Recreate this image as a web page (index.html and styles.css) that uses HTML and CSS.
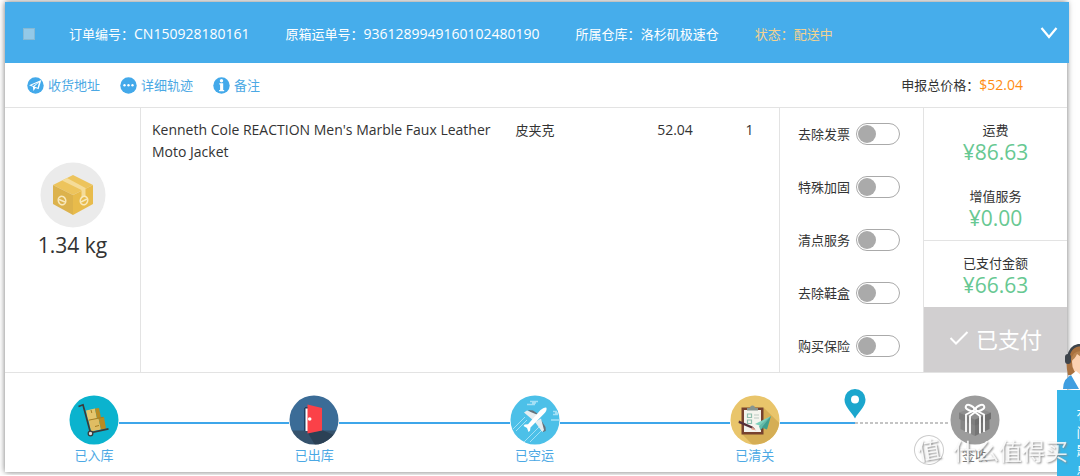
FILE: index.html
```html
<!DOCTYPE html>
<html lang="zh-CN">
<head>
<meta charset="utf-8">
<meta name="viewport" content="width=device-width, initial-scale=1">
<title>订单详情</title>
<link rel="stylesheet" href="styles.css">
</head>
<body>
<main class="order">
  <header class="order-head">
    <input class="pick" type="checkbox" aria-label="选择订单">
    <span class="field">订单编号<span class="colon">：</span><span class="num">CN150928180161</span></span>
    <span class="field">原箱运单号<span class="colon">：</span><span class="num">9361289949160102480190</span></span>
    <span class="field">所属仓库<span class="colon">：</span>洛杉矶极速仓</span>
    <span class="field state">状态<span class="colon">：</span>配送中</span>
    <button class="fold" type="button" aria-label="收起">
      <svg width="18" height="14" viewBox="0 0 18 14"><path d="M1.500 1 9 10 16.500 1" fill="none" stroke="#fff" stroke-width="2.200"/></svg>
    </button>
  </header>

  <nav class="tools">
    <a href="#address"><svg width="17" height="17" viewBox="0 0 17 17"><circle cx="8.500" cy="8.500" r="8.200" fill="#43a9ea"/><path d="M14.300 3 2 8.300l3.900 1.500.5 4.200 2.200-3 3 1.200z" fill="#fff"/><path d="M12 5.300 7.400 9.500l3.200 1.200zM11 5.400 4.500 8.300l1.800.7z" fill="#43a9ea"/></svg>收货地址</a>
    <a href="#trace"><svg width="17" height="17" viewBox="0 0 17 17"><circle cx="8.500" cy="8.500" r="8.200" fill="#43a9ea"/><g fill="#fff"><circle cx="4.500" cy="8.200" r="1.200"/><circle cx="8.500" cy="8.200" r="1.200"/><circle cx="12.500" cy="8.200" r="1.200"/></g></svg>详细轨迹</a>
    <a href="#note"><svg width="17" height="17" viewBox="0 0 17 17"><circle cx="8.500" cy="8.500" r="8.200" fill="#43a9ea"/><circle cx="8.500" cy="3.700" r="1.700" fill="#fff"/><path d="M6.300 6.200h3.900v6.800h1V14.300H6.100V13h1V7.400h-.8z" fill="#fff"/></svg>备注</a>
    <span class="total">申报总价格<span class="colon">：</span><span class="num amount">$52.04</span></span>
  </nav>

  <section class="detail">
    <div class="weight">
      <svg width="66" height="66" viewBox="0 0 66 66"><circle cx="33" cy="33" r="32.500" fill="#ebebeb"/><path d="M33 13 53 23 33 33 13 23z" fill="#edc45c"/><path d="M13 23 33 33v20L13 42z" fill="#dcb24c"/><path d="M53 23 33 33v20l20-11z" fill="#e8bb4b"/><path d="m22 18.500 5-2.500 18.500 10v8l-4 2v-8z" fill="#f5dc98"/><g fill="none" stroke="#f8e9bd" stroke-width="1.500"><ellipse cx="22" cy="38.500" rx="3.700" ry="4.300" transform="rotate(-20 22 38.500)"/><path d="m19 37.500 6 2.500"/><ellipse cx="44" cy="38.500" rx="3.700" ry="4.300" transform="rotate(20 44 38.500)"/><path d="m41 40 6-3"/></g></svg>
      <strong>1.34 kg</strong>
    </div>
    <div class="goods">
      <table>
        <tbody><tr>
          <td class="c-name num">Kenneth Cole REACTION Men's Marble Faux Leather Moto Jacket</td>
          <td class="c-type">皮夹克</td>
          <td class="c-price num">52.04</td>
          <td class="c-qty num">1</td>
        </tr></tbody>
      </table>
    </div>
    <div class="options">
      <label>去除发票<input type="checkbox" class="switch"></label>
      <label>特殊加固<input type="checkbox" class="switch"></label>
      <label>清点服务<input type="checkbox" class="switch"></label>
      <label>去除鞋盒<input type="checkbox" class="switch"></label>
      <label>购买保险<input type="checkbox" class="switch"></label>
    </div>
    <div class="bill">
      <dl class="fees">
        <div><dt>运费</dt><dd>¥86.63</dd></div>
        <div><dt>增值服务</dt><dd>¥0.00</dd></div>
      </dl>
      <dl class="paid">
        <div><dt>已支付金额</dt><dd>¥66.63</dd></div>
      </dl>
      <button class="pay" type="button"><svg width="20" height="16" viewBox="0 0 20 16"><path d="m1.500 8 5.500 5.500L18.500 2" fill="none" stroke="#fff" stroke-width="2"/></svg>已支付</button>
    </div>
  </section>

  <ol class="steps">
    <li class="step">
      <svg width="50" height="50" viewBox="0 0 50 50"><circle cx="25" cy="25" r="24.500" fill="#0bb3ce"/><path d="m17 15.500 9-2 2 10-9 2z" fill="#e5c66d"/><path d="m26 13.500 4-.5 2 9.500-4 1z" fill="#b88b22"/><path d="m19.500 25 10-2 2.500 11.500-10 2z" fill="#dfbd63"/><path d="m29.500 23 5.500-1 2 11.500-5 1z" fill="#b88b22"/><path d="m19.500 25.200 15-3M26 31.500l4-1M22 15l.8 3" stroke="#a57d20" stroke-width="1"/><path d="M9.500 11.500 14 9.800l7.500 28 18-4" fill="none" stroke="#3b3b3b" stroke-width="1.700"/><circle cx="21.500" cy="38.500" r="2.300" fill="#ddd" stroke="#3b3b3b" stroke-width="1.300"/></svg>
      <span>已入库</span>
    </li>
    <li class="line"></li>
    <li class="step">
      <svg width="50" height="50" viewBox="0 0 50 50"><clipPath id="disc"><circle cx="25" cy="25" r="24.500"/></clipPath><g clip-path="url(#disc)"><path d="M0 0h50v36H0z" fill="#3b6c97"/><path d="M0 35.500h50V50H0z" fill="#35526c"/><path d="M19 38 34 35.500 50 42v8H26z" fill="#2b4155"/></g><path d="M15.500 12.500h6v23.500h-6z" fill="#fff"/><path d="M15 12.500h1.500V36H15zM16 12h7v1.500h-7z" fill="#1f3f60"/><path d="m18.500 9.500 14.500 3.500v22.500l-14.500 3z" fill="#fb4148"/><circle cx="20.700" cy="24" r="1.800" fill="#fff"/></svg>
      <span>已出库</span>
    </li>
    <li class="line"></li>
    <li class="step">
      <svg width="50" height="50" viewBox="0 0 50 50"><circle cx="25" cy="25" r="24.500" fill="#4cc0e8"/><g stroke="#a3e0f5" stroke-width="1.300" fill="none"><path d="M20 6.500h8M17 9.500h8M22 8h4M43 16.500h4M43 19.500h5M41 25h8M45 18h3"/><path d="M3 34 15 22M6 36l11-11M14 47l16-16M20 47l12-12" stroke-width="1"/></g><path d="m18 15 5 .5 5 3.500-3 2zM31 25l4.500 7 .3 4-3 1z" fill="#65717a"/><path d="M14 17.500 17 15.500 28 20 24 26zM25 27l6-3.500 3 11.500-1.700 2z" fill="#e6edf0"/><path d="M36.500 12.700q.7 2.800-2.500 6L20.500 32.500l-.5 3.300-1.500 1.200-1.500-4-3.500-2 1.200-1.400 3.300-.3L30.500 15q3.800-3.400 6-2.300z" fill="#fff"/></svg>
      <span>已空运</span>
    </li>
    <li class="line"></li>
    <li class="step">
      <svg width="50" height="50" viewBox="0 0 50 50"><circle cx="25" cy="25" r="24.500" fill="#e9c56b"/><path d="m34 13 15.300 15A24.500 24.500 0 0 1 22 49.300L12 39z" fill="#d5ae55"/><path d="M11.500 12.500h22v27h-22z" fill="#77422f"/><path d="M14 15h17v22H14z" fill="#f4f4ee"/><path d="M17 15.500h11V13h-3q0-2.500-2.500-2.500T20 13h-3z" fill="#87958f"/><g fill="none" stroke="#8fbfae" stroke-width="1.200"><path d="M17.500 19h4v3.500h-4zM17.500 25h4v3.500h-4z"/></g><path d="M24 20h5M24 23h5" stroke="#bccac3"/><path d="m9 25.500 13.500 6 2.500 2.500-3.300-.5L8.500 28z" fill="#54303a"/><path d="m22 32 4.500 3.500-5-1z" fill="#e6a08b"/><path d="M41 21 25 29l6 2z" fill="#7cd0bc"/><path d="m41 21-10 10-1 4 3-2 4 1.500z" fill="#3f9f8f"/><path d="M41 21 29 31l1.500 4.500 2-4z" fill="#65b9a8"/></svg>
      <span>已清关</span>
    </li>
    <li class="line last">
      <svg class="pin" width="22" height="30" viewBox="0 0 22 30"><path fill-rule="evenodd" d="M11 0A10.500 10.500 0 0 0 .5 10.500C.5 18 7 22 11 29.500 15 22 21.500 18 21.500 10.500A10.500 10.500 0 0 0 11 0zm0 6.500a4 4 0 1 1 0 8 4 4 0 0 1 0-8z" fill="#1ba6cd"/></svg>
    </li>
    <li class="step next">
      <svg width="50" height="50" viewBox="0 0 50 50"><circle cx="25" cy="25" r="24.500" fill="#9c9c9c"/><path d="M10.500 23 25 29v12L10.500 34z" fill="#858585"/><path d="M39.500 23 25 29v12l14.500-7z" fill="#757575"/><path d="M9 17.500 25 12l16 5.500-16 7z" fill="#8f8f8f"/><path d="M9 17.500 25 24.500v6L9 24z" fill="#7e7e7e"/><path d="M41 17.500 25 24.500v6L41 24z" fill="#6f6f6f"/><path d="m24 15.500-8 4v17.500M26 15.500l8 4v17.500M26.500 16l-6.500 5v17.500M23.500 16l6.500 5v17.500" fill="none" stroke="#fff" stroke-width="1.800"/><g fill="none" stroke="#fff" stroke-width="2"><ellipse cx="20" cy="13" rx="4.500" ry="2.500" transform="rotate(25 20 13)"/><ellipse cx="30" cy="13" rx="4.500" ry="2.500" transform="rotate(-25 30 13)"/></g></svg>
      <span>签收</span>
    </li>
  </ol>
</main>

<aside class="help">
  <svg width="36" height="46" viewBox="0 0 36 46"><path d="M5 31Q1 14 8 6 14-1 22 2q10 3 9 16l1 13z" fill="#a9713f"/><path d="M9 18q0-9 9-9t9 9q0 11-9 14-9-3-9-14z" fill="#fcd2b2"/><path d="M8 17q4-2 6-7 6 5 14 6-1-9-10-9T8 17z" fill="#b98350"/><path d="M0 45q0-11 10-15l8 8 8-8q10 4 10 15z" fill="#3f9ee0"/><path d="m8 31 5-4 5 4 5-4 5 4-8 14h-4z" fill="#fff"/><path d="M5 14Q7 1 18 1t13 13" fill="none" stroke="#3e444b" stroke-width="2.500"/><rect x="2" y="10" width="6" height="10" rx="3" fill="#3e444b"/></svg>
  <button type="button">有问题点我</button>
</aside>

<div class="watermark" aria-hidden="true"><span class="seal">值</span>什么值得买</div>
</body>
</html>
```

FILE: styles.css
```css
* { box-sizing: border-box; }

body {
  margin: 0;
  padding: 2px 13px 3px 5px;
  background: #fff;
  color: #333;
  font: 13px/22px "Noto Sans CJK SC", sans-serif;
}

button, input { font: inherit; margin: 0; }
button { border: 0; padding: 0; cursor: pointer; }
svg { display: block; flex: none; }
dl, dd, ol { margin: 0; padding: 0; }

.num { font-family: "Open Sans", "Noto Sans CJK SC", sans-serif; font-size: 14px; }
.colon { font-family: "Noto Sans CJK TC", sans-serif; }

.order {
  background: #fff;
  box-shadow: 0 0 6px rgba(0, 0, 0, .55);
}

.order-head {
  display: flex;
  align-items: center;
  height: 61px;
  margin-right: -2px;
  padding: 3px 11px 0 18px;
  background: #46adeb;
  color: #fff;
  white-space: nowrap;
}
.pick {
  appearance: none;
  width: 12px;
  height: 12px;
  margin-right: 34px;
  border: 1px solid #86b9d4;
  background: #93c9e8;
}
.field { margin-right: 36px; }
.state { color: #f2d291; }
.fold { margin-left: auto; background: none; }

.tools {
  display: flex;
  align-items: center;
  gap: 20px;
  height: 44px;
  padding: 0 44px 0 22px;
}
.tools a {
  display: flex;
  align-items: center;
  gap: 4px;
  color: #4ba8e4;
  text-decoration: none;
}
.total { margin-left: auto; }
.amount { color: #ff8c12; }

.detail {
  display: grid;
  grid-template-columns: 135px 1fr 144px 144px;
  border: solid #e3e3e3;
  border-width: 1px 0;
}
.detail > * + * { border-left: 1px solid #e3e3e3; }

.weight {
  display: flex;
  flex-direction: column;
  align-items: center;
  padding-top: 54px;
}
.weight strong {
  margin-top: 2px;
  font: 21px/30px "Open Sans", sans-serif;
}

.goods { padding: 11px; }
.goods table { width: 100%; border-collapse: collapse; table-layout: fixed; }
.goods td { padding: 0; vertical-align: top; }
.goods .c-name { width: 59%; padding-right: 20px; }
.c-type { width: 23%; }
.c-price { width: 12%; }
.c-qty { width: 6%; text-align: center; }

.options {
  display: flex;
  flex-direction: column;
  justify-content: space-between;
  padding: 15px 18px;
}
.options label {
  display: flex;
  align-items: center;
  gap: 6px;
  white-space: nowrap;
}
.switch {
  appearance: none;
  flex: none;
  width: 44px;
  height: 22px;
  padding: 1px;
  border: 1px solid #aaa;
  border-radius: 11px;
  background: #fff;
}
.switch::before {
  content: "";
  display: block;
  width: 18px;
  height: 18px;
  border-radius: 50%;
  background: #aaa;
}
.switch:checked { background: #46adeb; }
.switch:checked::before { margin-left: auto; }

.bill { text-align: center; }
.fees {
  display: grid;
  gap: 22px;
  padding: 11px 0;
  border-bottom: 1px solid #e3e3e3;
}
.paid { padding: 11px 0; }
.bill dd {
  color: #67c892;
  font: 21px/22px "Open Sans", sans-serif;
}
.pay {
  display: flex;
  align-items: center;
  justify-content: center;
  gap: 7px;
  width: 100%;
  height: 65px;
  padding-bottom: 3px;
  background: #d1cfd0;
  color: #fff;
  font-size: 22px;
}

.steps {
  display: flex;
  padding: 22px 67px 7px 64px;
  list-style: none;
}
.step {
  display: flex;
  flex-direction: column;
  align-items: center;
  width: 50px;
  color: #4ba8e4;
  line-height: 20px;
  white-space: nowrap;
}
.next { color: #777; }
.line {
  flex: 1;
  height: 2px;
  margin-top: 27px;
  background: #3ea6ea;
}
.last {
  position: relative;
  background: linear-gradient(90deg, #3ea6ea 44%, transparent 44%),
    repeating-linear-gradient(90deg, #c4c4c4 0 3px, #fff 3px 5px);
}
.pin {
  position: absolute;
  bottom: 5px;
  left: 38%;
}

.watermark {
  position: fixed;
  right: 12px;
  bottom: 9px;
  display: flex;
  align-items: center;
  gap: 9px;
  color: rgba(255, 255, 255, .85);
  font-size: 23px;
  line-height: 34px;
  text-shadow: 1px 1px 2px #888;
  pointer-events: none;
}
.seal {
  width: 30px;
  height: 30px;
  border: 1px solid #ccc;
  border-radius: 50%;
  line-height: 26px;
  text-align: center;
  transform: rotate(-10deg);
}

.help {
  position: fixed;
  top: 344px;
  right: -29px;
  width: 52px;
}
.help svg { margin-left: 6px; }
.help button {
  width: 100%;
  height: 120px;
  padding: 10px 17px;
  background: #37b6e9;
  color: #fff;
  line-height: 18px;
  white-space: normal;
  word-break: break-all;
}
```
